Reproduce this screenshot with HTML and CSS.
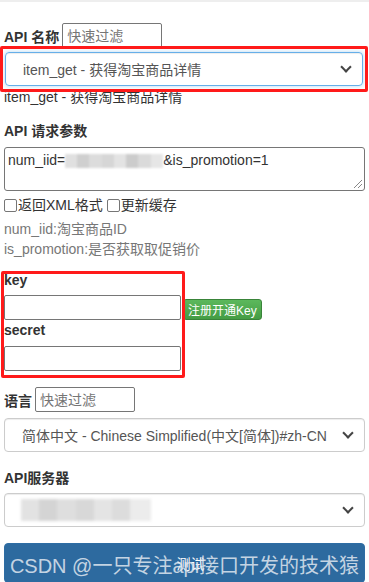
FILE: index.html
```html
<!DOCTYPE html>
<html lang="zh-CN">
<head>
  <meta charset="UTF-8" />
  <meta name="viewport" content="width=device-width, initial-scale=1.0"/>
  <title>API 测试</title>
  <link rel="stylesheet" href="styles.css">
</head>
<body>
  <div class="topline"></div>

  <div class="filter-row">
    <label class="label">API 名称</label>
    <input type="text" class="filter" placeholder="快速过滤">
  </div>
  <div class="select focused">
    <span>item_get - 获得淘宝商品详情</span>
    <span class="caret"></span>
  </div>
  <div class="api-desc">item_get - 获得淘宝商品详情</div>

  <div class="label block params-title">API 请求参数</div>
  <div class="params">num_iid=<span class="mosaic"></span>&amp;is_promotion=1<span class="grip"></span></div>
  <div class="checks">
    <label><span class="box"></span>返回XML格式</label>
    <label><span class="box"></span>更新缓存</label>
  </div>
  <div class="hint">
    <div>num_iid:淘宝商品ID</div>
    <div>is_promotion:是否获取取促销价</div>
  </div>

  <div class="keys">
    <div class="label block">key</div>
    <div class="key-row">
      <input type="text" class="plain">
      <button class="reg">注册开通Key</button>
    </div>
    <div class="label block secret">secret</div>
    <input type="text" class="plain secret-input">
  </div>

  <div class="filter-row lang">
    <label class="label">语言</label>
    <input type="text" class="filter" placeholder="快速过滤">
  </div>
  <div class="select">
    <span>简体中文 - Chinese Simplified(中文[简体])#zh-CN</span>
    <span class="caret"></span>
  </div>

  <div class="label block server">API服务器</div>
  <div class="select server-select">
    <span class="blurred"></span>
    <span class="caret"></span>
  </div>

  <button class="test"><span class="btn-text">测试</span></button>

  <div class="mark">CSDN @一只专注api接口开发的技术猿</div>
  <div class="annot annot-1"></div>
  <div class="annot annot-2"></div>
</body>
</html>
```

FILE: styles.css
```css
body {
  margin: 0;
  padding: 0 4px;
  font-family: "Liberation Sans", Arial, "Noto Sans CJK SC", sans-serif;
  font-size: 14px;
  color: #333;
  background: #fff;
  position: relative;
  height: 582px;
  overflow: hidden;
}

.topline {
  height: 2px;
  margin: 0 -4px;
  background: #eee;
}

.label {
  font-weight: bold;
  font-size: 14px;
  color: #333;
}

.block {
  height: 16px;
  line-height: 16px;
}

.filter-row {
  display: flex;
  align-items: center;
  gap: 3px;
  height: 25px;
  margin-top: 21px;
}

.filter {
  width: 100px;
  height: 25px;
  box-sizing: border-box;
  border: 1px solid #767676;
  border-radius: 2px;
  padding: 1px 4px;
  font: 14px "Liberation Sans", "Noto Sans CJK SC", sans-serif;
}

.filter::placeholder {
  color: #757575;
}

.select {
  margin-top: 4px;
  height: 34px;
  box-sizing: border-box;
  border: 1px solid #ccc;
  border-radius: 4px;
  display: flex;
  align-items: center;
  justify-content: space-between;
  padding: 0 12px 0 17px;
  color: #555;
  box-shadow: inset 0 1px 1px rgba(0, 0, 0, 0.075);
}

.select.focused {
  margin-left: 1px;
  margin-right: 2px;
  border-color: #66afe9;
  box-shadow: inset 0 1px 1px rgba(0, 0, 0, 0.075), 0 0 4px rgba(102, 175, 233, 0.5);
}

.caret {
  width: 6px;
  height: 6px;
  border-right: 2px solid #444;
  border-bottom: 2px solid #444;
  transform: rotate(45deg);
  margin-top: -5px;
}

.api-desc {
  margin-top: 3px;
  height: 16px;
  line-height: 16px;
}

.params-title {
  margin-top: 18px;
}

.params {
  position: relative;
  margin-top: 8px;
  height: 44px;
  box-sizing: border-box;
  border: 1px solid #767676;
  border-radius: 3px;
  padding: 4px 3px;
  line-height: 16px;
}

.mosaic {
  display: inline-block;
  vertical-align: middle;
  width: 98px;
  height: 14px;
  background: linear-gradient(to right, #e0e0e0 0 12%, #cfcfcf 12% 25%, #dcdcdc 25% 38%, #d6d6d6 38% 50%, #e3e3e3 50% 62%, #cccccc 62% 75%, #dadada 75% 88%, #e6e6e6 88%);
  filter: blur(1px);
}

.grip {
  position: absolute;
  right: 2px;
  bottom: 2px;
  width: 8px;
  height: 8px;
  background: linear-gradient(135deg, transparent 0 45%, #888 45% 52%, transparent 52% 70%, #888 70% 77%, transparent 77%);
}

.checks {
  margin-top: 6px;
  height: 16px;
  display: flex;
  gap: 4px;
  line-height: 16px;
}

.checks label {
  display: flex;
  align-items: center;
}

.box {
  width: 11px;
  height: 11px;
  border: 1px solid #767676;
  border-radius: 2px;
  margin-right: 1px;
}

.hint {
  margin-top: 6px;
  color: #777;
  font-size: 14px;
}

.hint div {
  height: 20px;
  line-height: 20px;
}

.keys {
  margin-top: 13px;
}

.key-row {
  display: flex;
  align-items: flex-end;
  gap: 2px;
  height: 25px;
  margin: 7px 0 2px;
}

.plain {
  display: block;
  width: 177px;
  height: 25px;
  box-sizing: border-box;
  border: 1px solid #767676;
  border-radius: 2px;
  margin: 0;
}

.secret-input {
  margin-top: 8px;
}

.reg {
  height: 21px;
  padding: 0 4px;
  border: 1px solid #398439;
  border-radius: 3px;
  background: linear-gradient(#5cb85c, #449d44);
  color: #fff;
  font: 12px "Liberation Sans", "Noto Sans CJK SC", sans-serif;
}

.lang {
  margin-top: 16px;
}

.lang + .select {
  margin-top: 6px;
}

.server {
  margin-top: 18px;
}

.server-select {
  margin-top: 7px;
}

.test {
  display: block;
  width: 100%;
  margin-top: 16px;
  height: 40px;
  border: 1px solid #2e6da4;
  border-radius: 4px;
  background: #2d6a9f;
  color: #fff;
  font: 14px "Liberation Sans", "Noto Sans CJK SC", sans-serif;
}

.btn-text {
  position: relative;
  left: 6px;
}

.mark {
  position: absolute;
  left: 0;
  right: 0;
  top: 553px;
  text-align: center;
  font-size: 20px;
  line-height: 26px;
  color: rgba(225, 232, 240, 0.85);
  white-space: nowrap;
}

.blurred {
  width: 130px;
  height: 22px;
  margin-left: -1px;
  background: linear-gradient(to right, #e2e2e2 0 14%, #d4d4d4 14% 28%, #dedede 28% 42%, #d8d8d8 42% 56%, #e4e4e4 56% 70%, #dcdcdc 70% 84%, #ececec 84%);
  filter: blur(1.5px);
}

.annot {
  position: absolute;
  border: 3px solid #ff1a1a;
  border-radius: 2px;
}

.annot-1 {
  left: 0;
  top: 46px;
  width: 362px;
  height: 40px;
}

.annot-2 {
  left: 1px;
  top: 271px;
  width: 178px;
  height: 101px;
}
```
